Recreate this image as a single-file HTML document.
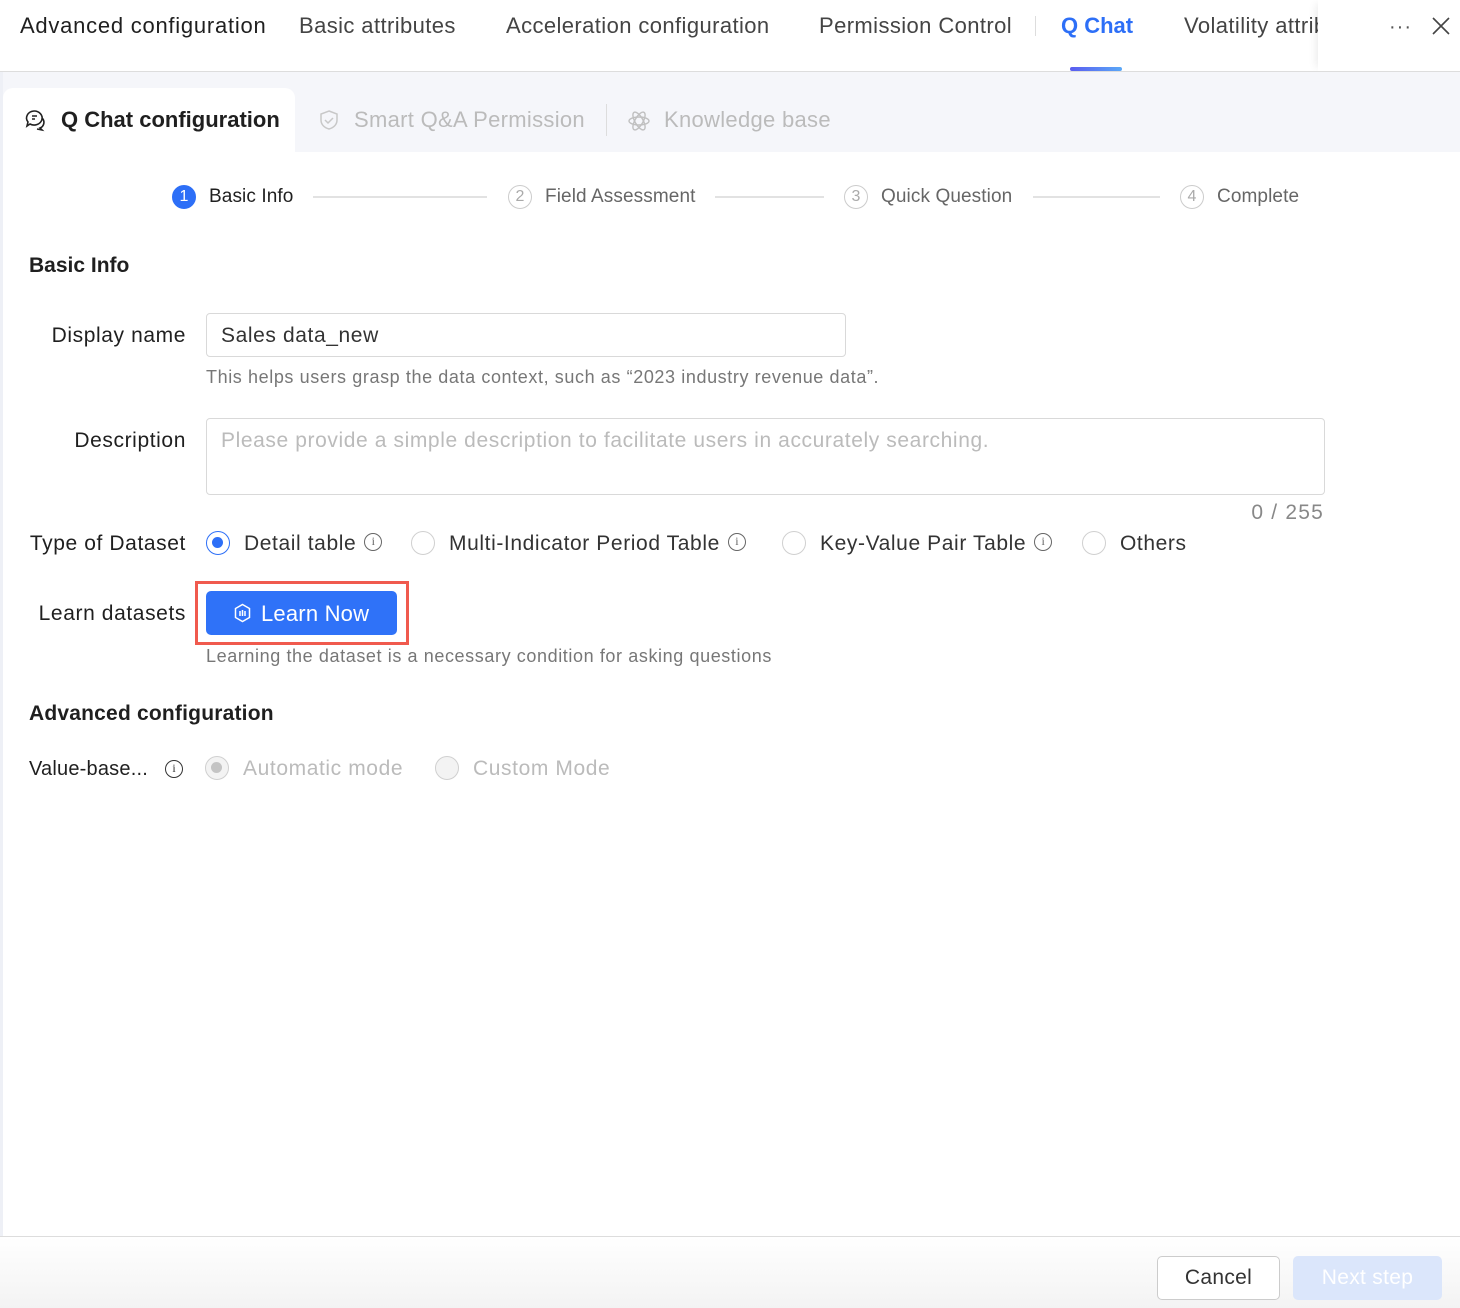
<!DOCTYPE html>
<html><head><meta charset="utf-8"><style>
*{box-sizing:border-box;margin:0;padding:0}
body{width:1460px;height:1308px;position:relative;background:#fff;font-family:"Liberation Sans",Arial,sans-serif;color:#1f1f1f;overflow:hidden;letter-spacing:0.6px}
.a{position:absolute;white-space:nowrap}
.tab{top:13px;font-size:22px;color:#444;letter-spacing:0.4px}
.lbl{font-size:21px;color:#1f1f1f;text-align:right;width:186px;left:0}
.radio{width:24px;height:24px;border:1.5px solid #d0d0d0;border-radius:50%;background:#fff}
.info{display:inline-block;vertical-align:middle;position:relative;top:-2px;margin-left:8px;width:18px;height:18px;border:1.4px solid #666;border-radius:50%;font-size:12px;text-align:center;line-height:15px;color:#666;font-family:"Liberation Serif",serif;letter-spacing:0}
.step{top:186px;font-size:19px;color:#666;letter-spacing:0.1px}
.num{top:185px;width:24px;height:24px;border:1.5px solid #ccc;border-radius:50%;font-size:16px;text-align:center;line-height:21px;color:#aaa;letter-spacing:0}
.line{top:196px;height:2px;background:#e2e2e2}
</style></head><body>
<div class="a" style="left:0;top:72px;width:3px;height:1236px;background:#eef0f6"></div>
<div class="a tab" style="left:20px;color:#1f1f1f;letter-spacing:0.75px">Advanced configuration</div>
<div class="a tab" style="left:299px">Basic attributes</div>
<div class="a tab" style="left:506px">Acceleration configuration</div>
<div class="a tab" style="left:819px">Permission Control</div>
<div class="a" style="left:1035px;top:16px;width:1px;height:20px;background:#ddd"></div>
<div class="a tab" style="left:1061px;color:#2d6ff7;font-weight:bold;letter-spacing:0">Q Chat</div>
<div class="a" style="left:1070px;top:67px;width:52px;height:4px;border-radius:2px;background:linear-gradient(90deg,#5a5cf0,#5aa8f7)"></div>
<div class="a tab" style="left:1184px;width:134px;overflow:hidden">Volatility attributes</div>
<div class="a" style="left:1318px;top:0;width:142px;height:71px;background:#fff;box-shadow:-6px 0 8px -4px rgba(0,0,0,.08)"></div>
<div class="a" style="left:1389px;top:16px;font-size:20px;color:#555;letter-spacing:1px">···</div>
<svg class="a" style="left:1432px;top:17px" width="18" height="18" viewBox="0 0 18 18"><path d="M1 1L17 17M17 1L1 17" stroke="#444" stroke-width="1.6"/></svg>
<div class="a" style="left:0;top:71px;width:1460px;height:1px;background:#ddd"></div>
<div class="a" style="left:3px;top:72px;width:1457px;height:80px;background:#f5f6fa"></div>
<div class="a" style="left:3px;top:88px;width:292px;height:70px;background:#fff;border-radius:10px 10px 0 0"></div>
<svg class="a" style="left:24px;top:108px" width="24" height="24" viewBox="0 0 24 24" fill="none" stroke="#222" stroke-width="1.6"><path d="M10 3a8 7 0 1 1-4 13l-3 2 1-4A8 7 0 0 1 10 3z"/><path d="M8 8h5M8 11h3"/><path d="M18 10a6 6 0 0 1-2 10l2 2-5-1"/></svg>
<div class="a" style="left:61px;top:107px;font-size:22px;font-weight:bold;color:#1f1f1f;letter-spacing:0">Q Chat configuration</div>
<svg class="a" style="left:318px;top:109px" width="22" height="22" viewBox="0 0 22 22" fill="none" stroke="#c8c8c8" stroke-width="1.5"><path d="M11 2l8 3v6c0 5-4 8-8 9-4-1-8-4-8-9V5z"/><path d="M7 11l3 3 5-5"/></svg>
<div class="a" style="left:354px;top:107px;font-size:22px;color:#bbb;letter-spacing:0.3px">Smart Q&amp;A Permission</div>
<div class="a" style="left:606px;top:104px;width:1px;height:32px;background:#ddd"></div>
<svg class="a" style="left:627px;top:109px" width="24" height="24" viewBox="0 0 24 24" fill="none" stroke="#c0c0c0" stroke-width="1.4"><ellipse cx="12" cy="12" rx="10" ry="4"/><ellipse cx="12" cy="12" rx="10" ry="4" transform="rotate(60 12 12)"/><ellipse cx="12" cy="12" rx="10" ry="4" transform="rotate(120 12 12)"/></svg>
<div class="a" style="left:664px;top:107px;font-size:22px;color:#bbb;letter-spacing:0.3px">Knowledge base</div>

<div class="a num" style="left:172px;background:#2d6ff7;border-color:#2d6ff7;color:#fff">1</div>
<div class="a step" style="left:209px;color:#1f1f1f">Basic Info</div>
<div class="a line" style="left:313px;width:174px"></div>
<div class="a num" style="left:508px">2</div>
<div class="a step" style="left:545px">Field Assessment</div>
<div class="a line" style="left:715px;width:109px"></div>
<div class="a num" style="left:844px">3</div>
<div class="a step" style="left:881px">Quick Question</div>
<div class="a line" style="left:1033px;width:127px"></div>
<div class="a num" style="left:1180px">4</div>
<div class="a step" style="left:1217px">Complete</div>

<div class="a" style="left:29px;top:254px;font-size:21px;font-weight:bold;letter-spacing:0">Basic Info</div>
<div class="a lbl" style="top:324px">Display name</div>
<div class="a" style="left:206px;top:313px;width:640px;height:44px;border:1px solid #d9d9d9;border-radius:4px;padding:10px 14px;font-size:21px;color:#333">Sales data_new</div>
<div class="a" style="left:206px;top:367px;font-size:18px;color:#777">This helps users grasp the data context, such as “2023 industry revenue data”.</div>
<div class="a lbl" style="top:429px">Description</div>
<div class="a" style="left:206px;top:418px;width:1119px;height:77px;border:1px solid #d9d9d9;border-radius:4px;padding:10px 14px;font-size:21px;color:#bbb">Please provide a simple description to facilitate users in accurately searching.</div>
<div class="a" style="right:136px;top:501px;font-size:21px;color:#888;letter-spacing:1.2px">0 / 255</div>

<div class="a lbl" style="top:532px">Type of Dataset</div>
<div class="a radio" style="left:206px;top:531px;border-color:#2d6ff7"><div style="margin:5px;width:11px;height:11px;border-radius:50%;background:#2d6ff7"></div></div>
<div class="a" style="left:244px;top:532px;font-size:21px;color:#333">Detail table<span class="info">i</span></div>
<div class="a radio" style="left:411px;top:531px"></div>
<div class="a" style="left:449px;top:532px;font-size:21px;color:#333">Multi-Indicator Period Table<span class="info">i</span></div>
<div class="a radio" style="left:782px;top:531px"></div>
<div class="a" style="left:820px;top:532px;font-size:21px;color:#333">Key-Value Pair Table<span class="info">i</span></div>
<div class="a radio" style="left:1082px;top:531px"></div>
<div class="a" style="left:1120px;top:532px;font-size:21px;color:#333">Others</div>

<div class="a lbl" style="top:602px">Learn datasets</div>
<div class="a" style="left:195px;top:581px;width:214px;height:64px;border:3px solid #f05a4e"></div>
<div class="a" style="left:206px;top:591px;width:191px;height:44px;background:#2f72f8;border-radius:5px"></div>
<svg class="a" style="left:233px;top:603px" width="19" height="20" viewBox="0 0 19 20" fill="none" stroke="#fff" stroke-width="1.5"><path d="M9.5 1.5l7 4v9l-7 4-7-4v-9z"/><path d="M7 8v5M9.5 7v6M12 8v5"/></svg>
<div class="a" style="left:261px;top:601px;font-size:22px;color:#fff;letter-spacing:0.2px">Learn Now</div>
<div class="a" style="left:206px;top:646px;font-size:18px;color:#777">Learning the dataset is a necessary condition for asking questions</div>

<div class="a" style="left:29px;top:702px;font-size:21px;font-weight:bold;letter-spacing:0.2px">Advanced configuration</div>
<div class="a" style="left:29px;top:758px;font-size:20px;letter-spacing:0.2px">Value-base...</div>
<div class="a info" style="left:157px;top:760px;border-color:#333;color:#333">i</div>
<div class="a radio" style="left:205px;top:756px;background:#f3f3f3"><div style="margin:5px;width:11px;height:11px;border-radius:50%;background:#c4c4c4"></div></div>
<div class="a" style="left:243px;top:757px;font-size:21px;color:#bbb">Automatic mode</div>
<div class="a radio" style="left:435px;top:756px;background:#f3f3f3"></div>
<div class="a" style="left:473px;top:757px;font-size:21px;color:#bbb">Custom Mode</div>

<div class="a" style="left:0;top:1236px;width:1460px;height:1px;background:#ddd"></div>
<div class="a" style="left:0;top:1237px;width:1460px;height:71px;background:linear-gradient(180deg,#fff,#f3f3f3)"></div>
<div class="a" style="left:1157px;top:1256px;width:123px;height:44px;border:1px solid #ccc;border-radius:5px;background:#fff;font-size:21px;color:#333;text-align:center;line-height:42px;letter-spacing:0.3px">Cancel</div>
<div class="a" style="left:1293px;top:1256px;width:149px;height:44px;border-radius:5px;background:#dbe6fb;font-size:21px;color:#fff;text-align:center;line-height:44px;letter-spacing:0.3px">Next step</div>
</body></html>
